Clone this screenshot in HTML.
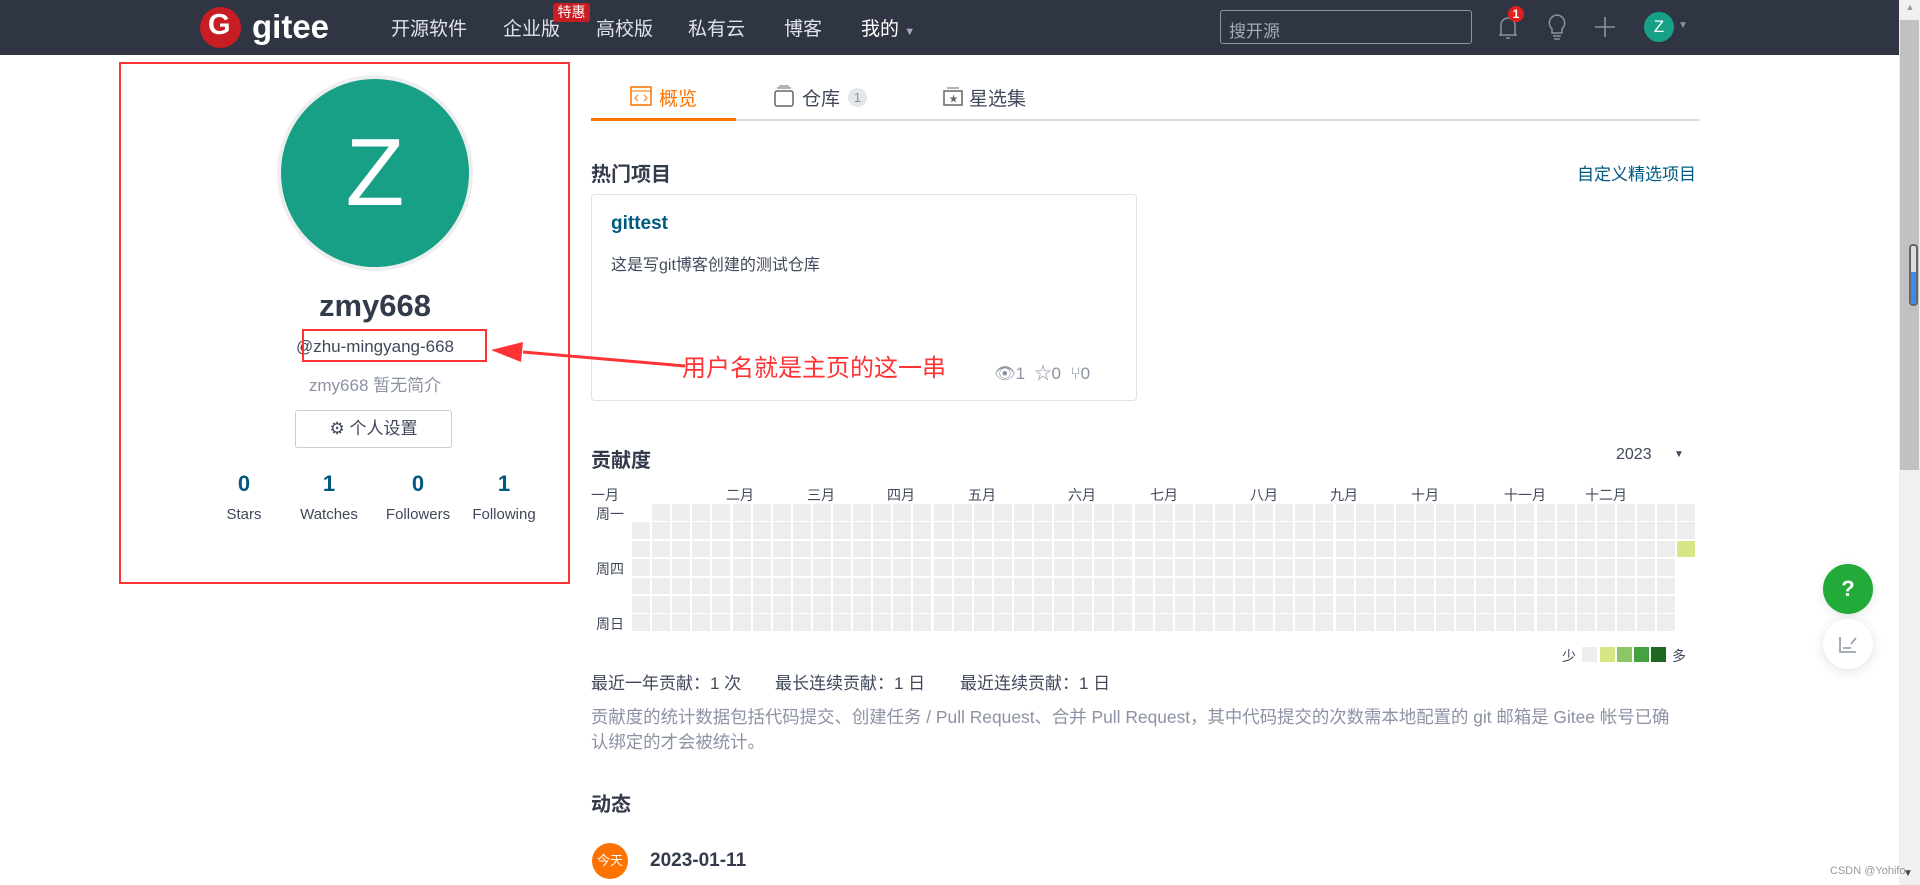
<!DOCTYPE html>
<html><head><meta charset="utf-8"><style>
*{margin:0;padding:0;box-sizing:border-box}
body{width:1920px;height:885px;overflow:hidden;background:#fff;font-family:"Liberation Sans","Noto Sans CJK SC",sans-serif;color:#40485b;position:relative}
.a{position:absolute;white-space:nowrap}
.nav{position:absolute;left:0;top:0;width:1899px;height:55px;background:#2f3542}
.ni{position:absolute;top:14px;font-size:19px;color:#dfe3ea}
.gc{position:absolute;background:#ededed;width:18px;height:16.5px}
.ml{position:absolute;top:485px;font-size:14px;color:#40485b}
</style></head><body>
<div class="nav">
  <div class="a" style="left:200px;top:7px;width:41px;height:41px;border-radius:50%;background:#c71d23"></div>
  <div class="a" style="left:208px;top:9px;font:bold 29px 'Liberation Sans';color:#fff">G</div>
  <div class="a" style="left:252px;top:8px;font:bold 33px 'Liberation Sans';color:#fff;letter-spacing:0">gitee</div>
  <div class="ni" style="left:391px">开源软件</div>
  <div class="ni" style="left:503px">企业版</div>
  <div class="a" style="left:553px;top:3px;width:37px;height:19px;background:#c71d23;border-radius:3px;color:#fff;font-size:14px;text-align:center;line-height:19px">特惠</div>
  <div class="ni" style="left:596px">高校版</div>
  <div class="ni" style="left:688px">私有云</div>
  <div class="ni" style="left:784px">博客</div>
  <div class="ni" style="left:861px;color:#fff">我的 <span style="font-size:11px;color:#aab">▼</span></div>
  <div class="a" style="left:1220px;top:10px;width:252px;height:34px;border:1px solid #8b92a0;border-radius:3px;color:#a5abb6;font-size:17px;padding:6px 0 0 8px">搜开源</div>
  <svg class="a" style="left:1496px;top:14px" width="24" height="28" viewBox="0 0 24 28"><path d="M5 21V11a7 7 0 0 1 14 0v10z M3 21h18 M10 24h4" stroke="#8b92a0" stroke-width="1.5" fill="none"/></svg>
  <div class="a" style="left:1508px;top:6px;width:16px;height:16px;border-radius:50%;background:#e02020;color:#fff;font:bold 12px 'Liberation Sans';text-align:center;line-height:16px">1</div>
  <svg class="a" style="left:1546px;top:13px" width="22" height="30" viewBox="0 0 22 30"><path d="M11 2a8 8 0 0 0-5 14v4h10v-4a8 8 0 0 0-5-14z M7 23h8 M8 26h6" stroke="#8b92a0" stroke-width="1.5" fill="none"/></svg>
  <svg class="a" style="left:1594px;top:16px" width="22" height="22"><path d="M11 1v20M1 11h20" stroke="#8b92a0" stroke-width="1.6"/></svg>
  <div class="a" style="left:1644px;top:12px;width:30px;height:30px;border-radius:50%;background:#17a085;color:#fff;font-size:17px;text-align:center;line-height:30px">Z</div>
  <div class="a" style="left:1678px;top:20px;font-size:10px;color:#8b92a0">▼</div>
</div>
<div class="a" style="left:1899px;top:0;width:21px;height:885px;background:#f0f0f0"></div>
<div class="a" style="left:1900px;top:0;width:20px;height:14px;color:#999;font-size:9px;text-align:center;line-height:14px">▲</div>
<div class="a" style="left:1900px;top:20px;width:19px;height:450px;background:#c1c1c1"></div>
<div class="a" style="left:1909px;top:244px;width:9px;height:62px;border:2px solid #666;border-radius:4px;background:#ddd"></div>
<div class="a" style="left:1911px;top:272px;width:5px;height:32px;background:#3b8cf0"></div>
<div class="a" style="left:1903px;top:868px;color:#444;font-size:10px">▼</div>

<div class="a" style="left:119px;top:62px;width:451px;height:522px;border:2px solid #f33"></div>
<div class="a" style="left:277px;top:75px;width:196px;height:196px;border-radius:50%;background:#eee"></div>
<div class="a" style="left:281px;top:79px;width:188px;height:188px;border-radius:50%;background:#17a085;color:#fff;font-size:96px;text-align:center;line-height:188px">Z</div>
<div class="a" style="left:175px;top:288px;width:400px;text-align:center;font:bold 31px 'Liberation Sans';color:#333a4c">zmy668</div>
<div class="a" style="left:175px;top:337px;width:400px;text-align:center;font-size:17px;color:#40485b">@zhu-mingyang-668</div>
<div class="a" style="left:302px;top:329px;width:185px;height:33px;border:2px solid #f33"></div>
<div class="a" style="left:175px;top:371px;width:400px;text-align:center;font-size:17px;color:#8c92a4">zmy668 暂无简介</div>
<div class="a" style="left:295px;top:410px;width:157px;height:38px;border:1px solid #ccc;border-radius:3px;text-align:center;line-height:36px;font-size:17px;color:#40485b">⚙ 个人设置</div>
<div class="a" style="left:204px;top:471px;width:80px;text-align:center;font:bold 22px 'Liberation Sans';color:#005980">0</div>
<div class="a" style="left:289px;top:471px;width:80px;text-align:center;font:bold 22px 'Liberation Sans';color:#005980">1</div>
<div class="a" style="left:378px;top:471px;width:80px;text-align:center;font:bold 22px 'Liberation Sans';color:#005980">0</div>
<div class="a" style="left:464px;top:471px;width:80px;text-align:center;font:bold 22px 'Liberation Sans';color:#005980">1</div>
<div class="a" style="left:194px;top:506px;width:100px;text-align:center;font-size:15px">Stars</div>
<div class="a" style="left:279px;top:506px;width:100px;text-align:center;font-size:15px">Watches</div>
<div class="a" style="left:368px;top:506px;width:100px;text-align:center;font-size:15px">Followers</div>
<div class="a" style="left:449px;top:506px;width:110px;text-align:center;font-size:15px">Following</div>

<div class="a" style="left:591px;top:119px;width:1109px;height:2px;background:#ddd"></div>
<div class="a" style="left:591px;top:118px;width:145px;height:3px;background:#fe7300"></div>
<svg class="a" style="left:630px;top:86px" width="22" height="20"><rect x="1" y="1" width="20" height="18" fill="none" stroke="#fe7300" stroke-width="1.5"/><path d="M1 5h20M8 9l-3 3 3 3M14 9l3 3-3 3" stroke="#fe7300" fill="none"/></svg>
<div class="a" style="left:659px;top:84px;font-size:19px;color:#fe7300">概览</div>
<svg class="a" style="left:774px;top:85px" width="20" height="22"><rect x="1" y="6" width="18" height="15" rx="2" fill="none" stroke="#666" stroke-width="1.5"/><path d="M3 3h14M5 1h10" stroke="#666"/></svg>
<div class="a" style="left:802px;top:84px;font-size:19px;color:#40485b">仓库</div>
<div class="a" style="left:848px;top:88px;width:19px;height:19px;border-radius:50%;background:#e3e6eb;color:#8c92a4;font-size:13px;text-align:center;line-height:19px">1</div>
<svg class="a" style="left:943px;top:86px" width="20" height="20"><rect x="1" y="5" width="18" height="14" fill="none" stroke="#666" stroke-width="1.5"/><path d="M4 2h12" stroke="#666"/><text x="6" y="16" font-size="9" fill="#666">★</text></svg>
<div class="a" style="left:969px;top:84px;font-size:19px;color:#40485b">星选集</div>

<div class="a" style="left:591px;top:158px;font-size:20px;font-weight:bold;color:#333a4c">热门项目</div>
<div class="a" style="left:1577px;top:160px;font-size:17px;color:#005980">自定义精选项目</div>
<div class="a" style="left:591px;top:194px;width:546px;height:207px;border:1px solid #dfe3e8;border-radius:4px"></div>
<div class="a" style="left:611px;top:213px;font:bold 19px 'Liberation Sans';color:#005980">gittest</div>
<div class="a" style="left:611px;top:251px;font-size:16px;color:#40485b">这是写git博客创建的测试仓库</div>
<div class="a" style="left:994px;top:359px;font-size:17px;color:#8c92a4">👁︎1 &nbsp;☆0 &nbsp;⑂0</div>

<svg class="a" style="left:485px;top:340px" width="200" height="40"><path d="M200 26 L38 12" stroke="#f33" stroke-width="3"/><path d="M6 10 L38 2 L36 22 Z" fill="#f33"/></svg>
<div class="a" style="left:682px;top:348px;font-size:24px;color:#f33">用户名就是主页的这一串</div>

<div class="a" style="left:591px;top:444px;font-size:20px;font-weight:bold;color:#333a4c">贡献度</div>
<div class="a" style="left:1616px;top:446px;font-size:16px;color:#40485b">2023</div>
<div class="a" style="left:1674px;top:449px;font-size:10px;color:#40485b">▼</div>
<div class="ml" style="left:591px">一月</div><div class="ml" style="left:726px">二月</div><div class="ml" style="left:807px">三月</div><div class="ml" style="left:887px">四月</div><div class="ml" style="left:968px">五月</div><div class="ml" style="left:1068px">六月</div><div class="ml" style="left:1150px">七月</div><div class="ml" style="left:1250px">八月</div><div class="ml" style="left:1330px">九月</div><div class="ml" style="left:1411px">十月</div><div class="ml" style="left:1504px">十一月</div><div class="ml" style="left:1585px">十二月</div>
<div class="a" style="left:596px;top:504px;font-size:14px">周一</div>
<div class="a" style="left:596px;top:559px;font-size:14px">周四</div>
<div class="a" style="left:596px;top:614px;font-size:14px">周日</div>
<div id="g"></div>
<div class="a" style="left:1562px;top:646px;font-size:14px">少</div>
<div class="a" style="left:1582px;top:647px;width:15px;height:15px;background:#ededed"></div>
<div class="a" style="left:1600px;top:647px;width:15px;height:15px;background:#d6e685"></div>
<div class="a" style="left:1617px;top:647px;width:15px;height:15px;background:#8cc665"></div>
<div class="a" style="left:1634px;top:647px;width:15px;height:15px;background:#44a340"></div>
<div class="a" style="left:1651px;top:647px;width:15px;height:15px;background:#1e6823"></div>
<div class="a" style="left:1672px;top:646px;font-size:14px">多</div>
<div class="a" style="left:591px;top:669px;font-size:17px;color:#40485b">最近一年贡献：1 次</div>
<div class="a" style="left:775px;top:669px;font-size:17px;color:#40485b">最长连续贡献：1 日</div>
<div class="a" style="left:960px;top:669px;font-size:17px;color:#40485b">最近连续贡献：1 日</div>
<div class="a" style="left:591px;top:705px;font-size:17.4px;line-height:25px;color:#8c92a4">贡献度的统计数据包括代码提交、创建任务 / Pull Request、合并 Pull Request，其中代码提交的次数需本地配置的 git 邮箱是 Gitee 帐号已确<br>认绑定的才会被统计。</div>
<div class="a" style="left:591px;top:788px;font-size:20px;font-weight:bold;color:#333a4c">动态</div>
<div class="a" style="left:592px;top:843px;width:36px;height:36px;border-radius:50%;background:#fe7300;color:#fff;font-size:13px;text-align:center;line-height:36px">今天</div>
<div class="a" style="left:650px;top:850px;font:bold 19px 'Liberation Sans';color:#333a4c">2023-01-11</div>

<div class="a" style="left:1823px;top:564px;width:50px;height:50px;border-radius:50%;background:#22ab38;color:#fff;font:bold 22px 'Liberation Sans';text-align:center;line-height:50px;box-shadow:0 2px 10px rgba(0,0,0,.1)">?</div>
<div class="a" style="left:1823px;top:619px;width:50px;height:50px;border-radius:50%;background:#fff;box-shadow:0 2px 12px rgba(0,0,0,.12)"><svg style="position:absolute;left:15px;top:15px" width="20" height="20"><path d="M2 3v15h16M5 14h8M13 10l5-6" stroke="#8c92a4" stroke-width="1.5" fill="none"/></svg></div>
<div class="a" style="left:1830px;top:865px;font-size:11px;color:#999">CSDN @Yohifo</div>
<script>
var g=document.getElementById('g'),h='';
for(var c=0;c<53;c++)for(var r=0;r<7;r++){
 if(c==0&&r==0)continue; if(c==52&&r>2)continue;
 var col=(c==52&&r==2)?'#d6e685':'#ededed';
 h+='<div class="gc" style="left:'+(632+c*20.1).toFixed(1)+'px;top:'+(504+r*18.4).toFixed(1)+'px;background:'+col+'"></div>';
}
g.innerHTML=h;
</script>
</body></html>
